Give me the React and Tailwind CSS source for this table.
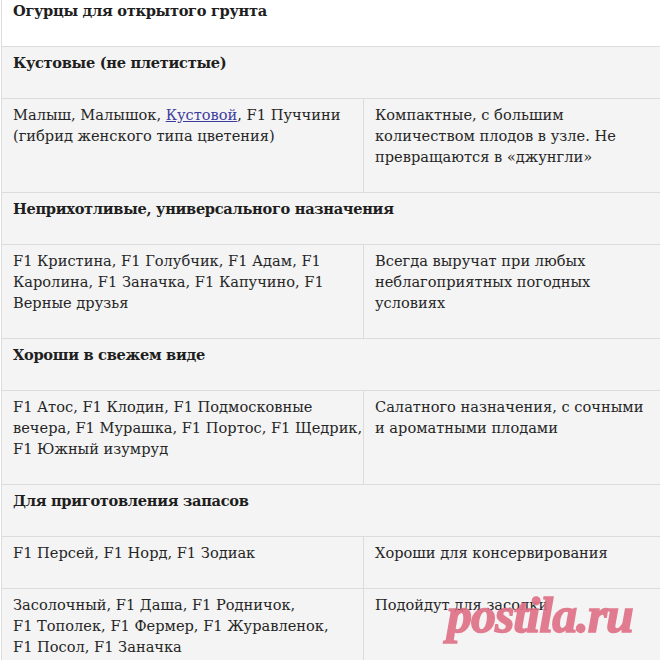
const rows = [
  { type: "head", text: "Кустовые (не плетистые)" },
  {
    type: "row",
    left: [
      <>Малыш, Малышок, <a href="#" className="text-[#3d3d9e] underline">Кустовой</a>, F1 Пуччини</>,
      "(гибрид женского типа цветения)",
    ],
    right: ["Компактные, с большим", "количеством плодов в узле. Не", "превращаются в «джунгли»"],
  },
  { type: "head", text: "Неприхотливые, универсального назначения" },
  {
    type: "row",
    left: ["F1 Кристина, F1 Голубчик, F1 Адам, F1", "Каролина, F1 Заначка, F1 Капучино, F1", "Верные друзья"],
    right: ["Всегда выручат при любых", "неблагоприятных погодных", "условиях"],
  },
  { type: "head", text: "Хороши в свежем виде" },
  {
    type: "row",
    left: ["F1 Атос, F1 Клодин, F1 Подмосковные", "вечера, F1 Мурашка, F1 Портос, F1 Щедрик,", "F1 Южный изумруд"],
    right: ["Салатного назначения, с сочными", "и ароматными плодами"],
  },
  { type: "head", text: "Для приготовления запасов" },
  { type: "row", left: ["F1 Персей, F1 Норд, F1 Зодиак"], right: ["Хороши для консервирования"] },
  {
    type: "row",
    left: ["Засолочный, F1 Даша, F1 Родничок,", "F1 Тополек, F1 Фермер, F1 Журавленок,", "F1 Посол, F1 Заначка"],
    right: ["Подойдут для засолки"],
  },
];

function Lines({ lines }) {
  return lines.map((l, i) => <div key={i} className="whitespace-nowrap">{l}</div>);
}

export default function App() {
  const cell = "border border-[#dcdcdc] px-[11px] pt-[5px] pb-[25px] align-top";
  const head = `${cell} font-bold tracking-[-0.3px] text-[#1e1e1e]`;
  return (
    <div className="relative h-[660px] w-[660px] overflow-hidden bg-white font-['DejaVu_Serif',serif] text-[14.6px] leading-[21px] text-[#262626]">
      <table className="-mt-[6px] ml-px w-[720px] table-fixed border-collapse">
        <colgroup>
          <col className="w-[362px]" />
          <col />
        </colgroup>
        <tbody>
          <tr className="bg-white">
            <td colSpan={2} className={head}>
              Огурцы для открытого грунта
            </td>
          </tr>
          {rows.map((r, i) =>
            r.type === "head" ? (
              <tr key={i} className="bg-[#f4f4f4]">
                <td colSpan={2} className={head}>
                  {r.text}
                </td>
              </tr>
            ) : (
              <tr key={i} className="bg-[#f4f4f4]">
                <td className={cell}>
                  <Lines lines={r.left} />
                </td>
                <td className={cell}>
                  <Lines lines={r.right} />
                </td>
              </tr>
            )
          )}
        </tbody>
      </table>
      <div className="pointer-events-none absolute left-[447px] top-[590px] font-['Liberation_Serif',serif] text-[50px] font-bold italic leading-none tracking-[-1px] text-[#df6f85] opacity-90 [-webkit-text-stroke:1.5px_#df6f85]">
        postila.ru
      </div>
    </div>
  );
}
